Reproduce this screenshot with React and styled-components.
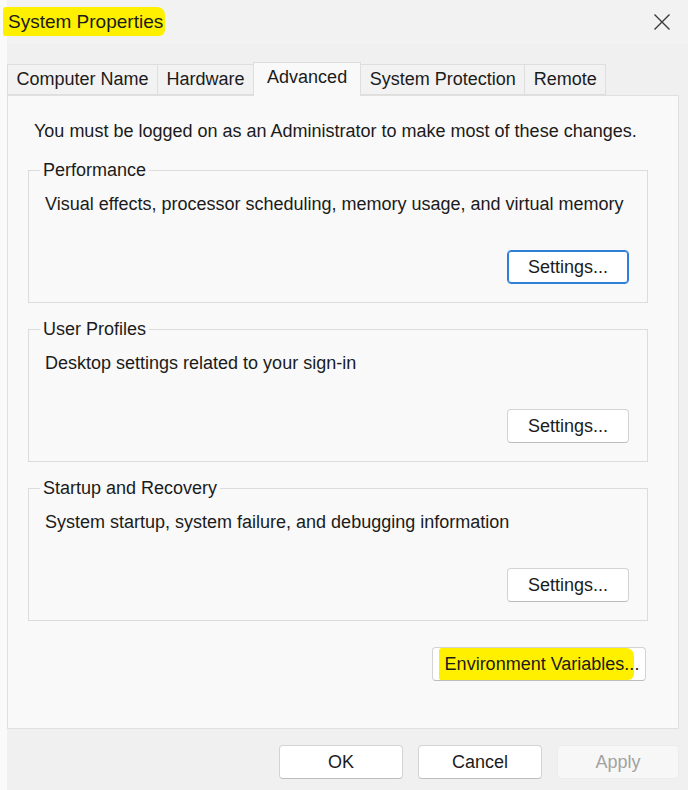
import React from 'react'
import styled, { createGlobalStyle } from 'styled-components'

const GlobalStyle = createGlobalStyle`
    html, body {
        margin: 0;
        padding: 0;
        background: #fafafa;
    }
    body {
        font-family: "Liberation Sans", Arial, sans-serif;
        color: #1b1b1b;
    }
`

const Window = styled.div`
    width: 688px;
    height: 790px;
    overflow: hidden;
    background: #fafafa;
`

const Frame = styled.div`
    margin-left: 7px;
    height: 100%;
    display: flex;
    flex-direction: column;
    background: #f0f0f0;
`

const TitleBar = styled.div`
    height: 44px;
    display: flex;
    align-items: center;
    justify-content: space-between;
    padding: 0 11px 0 1px;
    background: #f2f2f2;
`

const Title = styled.span`
    font-size: 19px;
`

const Marker = styled.span`
    background: #fff000;
    padding: ${p => p.$pad || '4px 2px 4px 5px'};
    margin-left: ${p => p.$shift || '-5px'};
    border-radius: 3px 8px 6px 2px;
`

const CloseButton = styled.button`
    width: 30px;
    height: 30px;
    border: none;
    background: transparent;
    padding: 0;
    display: flex;
    align-items: center;
    justify-content: center;
`

const TabStrip = styled.div`
    display: flex;
    align-items: flex-end;
    height: 51px;
    position: relative;
    z-index: 1;
`

const Tab = styled.div`
    box-sizing: border-box;
    height: ${p => (p.$active ? '34px' : '31px')};
    margin-bottom: ${p => (p.$active ? '-1px' : '0')};
    padding: ${p => (p.$active ? '0 13px 4px' : '0 8.5px')};
    display: flex;
    align-items: center;
    font-size: 18px;
    background: ${p => (p.$active ? '#f9f9f9' : '#f2f2f2')};
    border: 1px solid #dedede;
    border-bottom: ${p => (p.$active ? 'none' : '1px solid #dedede')};
    margin-right: -1px;
`

const Panel = styled.div`
    width: 672px;
    box-sizing: border-box;
    height: 634px;
    background: #f9f9f9;
    border: 1px solid #e0e0e0;
    padding: 25px 30px 0 20px;
    display: flex;
    flex-direction: column;
`

const Notice = styled.p`
    margin: 0 0 19px 6px;
    font-size: 18px;
    line-height: 20px;
`

const Group = styled.fieldset`
    margin: 0 0 16px;
    padding: 14px 18px 18px 16px;
    border: 1px solid #dcdcdc;
    min-width: 0;
`

const Legend = styled.legend`
    padding: 0 3px;
    margin-left: -5px;
    font-size: 18px;
    line-height: 20px;
`

const Description = styled.div`
    font-size: 18px;
    line-height: 20px;
    margin-bottom: 36px;
`

const ButtonRow = styled.div`
    display: flex;
    justify-content: flex-end;
    gap: 15px;
    margin-top: ${p => p.$top || '0'};
    margin-right: ${p => p.$inset || '0'};
`

const Button = styled.button`
    box-sizing: border-box;
    width: ${p => p.$width || '122px'};
    height: 34px;
    border-radius: 4px;
    background: ${p => (p.disabled ? '#f7f7f7' : '#ffffff')};
    border: 1px solid ${p => (p.disabled ? '#ececec' : '#d3d3d3')};
    border-bottom-color: ${p => (p.disabled ? '#ececec' : '#bdbdbd')};
    box-shadow: ${p => (p.$focused ? 'inset 0 0 0 1px #2f7fd8' : 'none')};
    ${p => p.$focused && 'border-color: #2f7fd8;'}
    font-family: inherit;
    font-size: 18px;
    color: ${p => (p.disabled ? '#a2a2a2' : '#1b1b1b')};
    padding: 0;
`

const Footer = styled.div`
    flex: 1;
    display: flex;
    justify-content: flex-end;
    padding: 16px 2px 0 0;
    width: 672px;
`

const groups = [
    {
        title: 'Performance',
        text: 'Visual effects, processor scheduling, memory usage, and virtual memory',
        focused: true,
    },
    { title: 'User Profiles', text: 'Desktop settings related to your sign-in' },
    {
        title: 'Startup and Recovery',
        text: 'System startup, system failure, and debugging information',
    },
]

const tabs = ['Computer Name', 'Hardware', 'Advanced', 'System Protection', 'Remote']

const CloseIcon = () => (
    <svg width="18" height="18" viewBox="0 0 18 18">
        <path d="M1.5 1.5 L16.5 16.5 M16.5 1.5 L1.5 16.5" stroke="#3a3a3a" strokeWidth="1.4" fill="none" />
    </svg>
)

export default function App() {
    return (
        <Window>
            <GlobalStyle />
            <Frame>
                <TitleBar>
                    <Title>
                        <Marker>System Properties</Marker>
                    </Title>
                    <CloseButton aria-label="Close">
                        <CloseIcon />
                    </CloseButton>
                </TitleBar>
                <TabStrip>
                    {tabs.map(t => (
                        <Tab key={t} $active={t === 'Advanced'}>{t}</Tab>
                    ))}
                </TabStrip>
                <Panel>
                    <Notice>You must be logged on as an Administrator to make most of these changes.</Notice>
                    {groups.map(g => (
                        <Group key={g.title}>
                            <Legend>{g.title}</Legend>
                            <Description>{g.text}</Description>
                            <ButtonRow>
                                <Button $focused={g.focused}>Settings...</Button>
                            </ButtonRow>
                        </Group>
                    ))}
                    <ButtonRow $inset="2px" $top="10px">
                        <Button $width="214px">
                            <Marker $pad="6px 0 6px 6px" $shift="0">Environment Variables..</Marker>.
                        </Button>
                    </ButtonRow>
                </Panel>
                <Footer>
                    <ButtonRow>
                        <Button $width="124px">OK</Button>
                        <Button $width="124px">Cancel</Button>
                        <Button $width="122px" disabled>Apply</Button>
                    </ButtonRow>
                </Footer>
            </Frame>
        </Window>
    )
}
